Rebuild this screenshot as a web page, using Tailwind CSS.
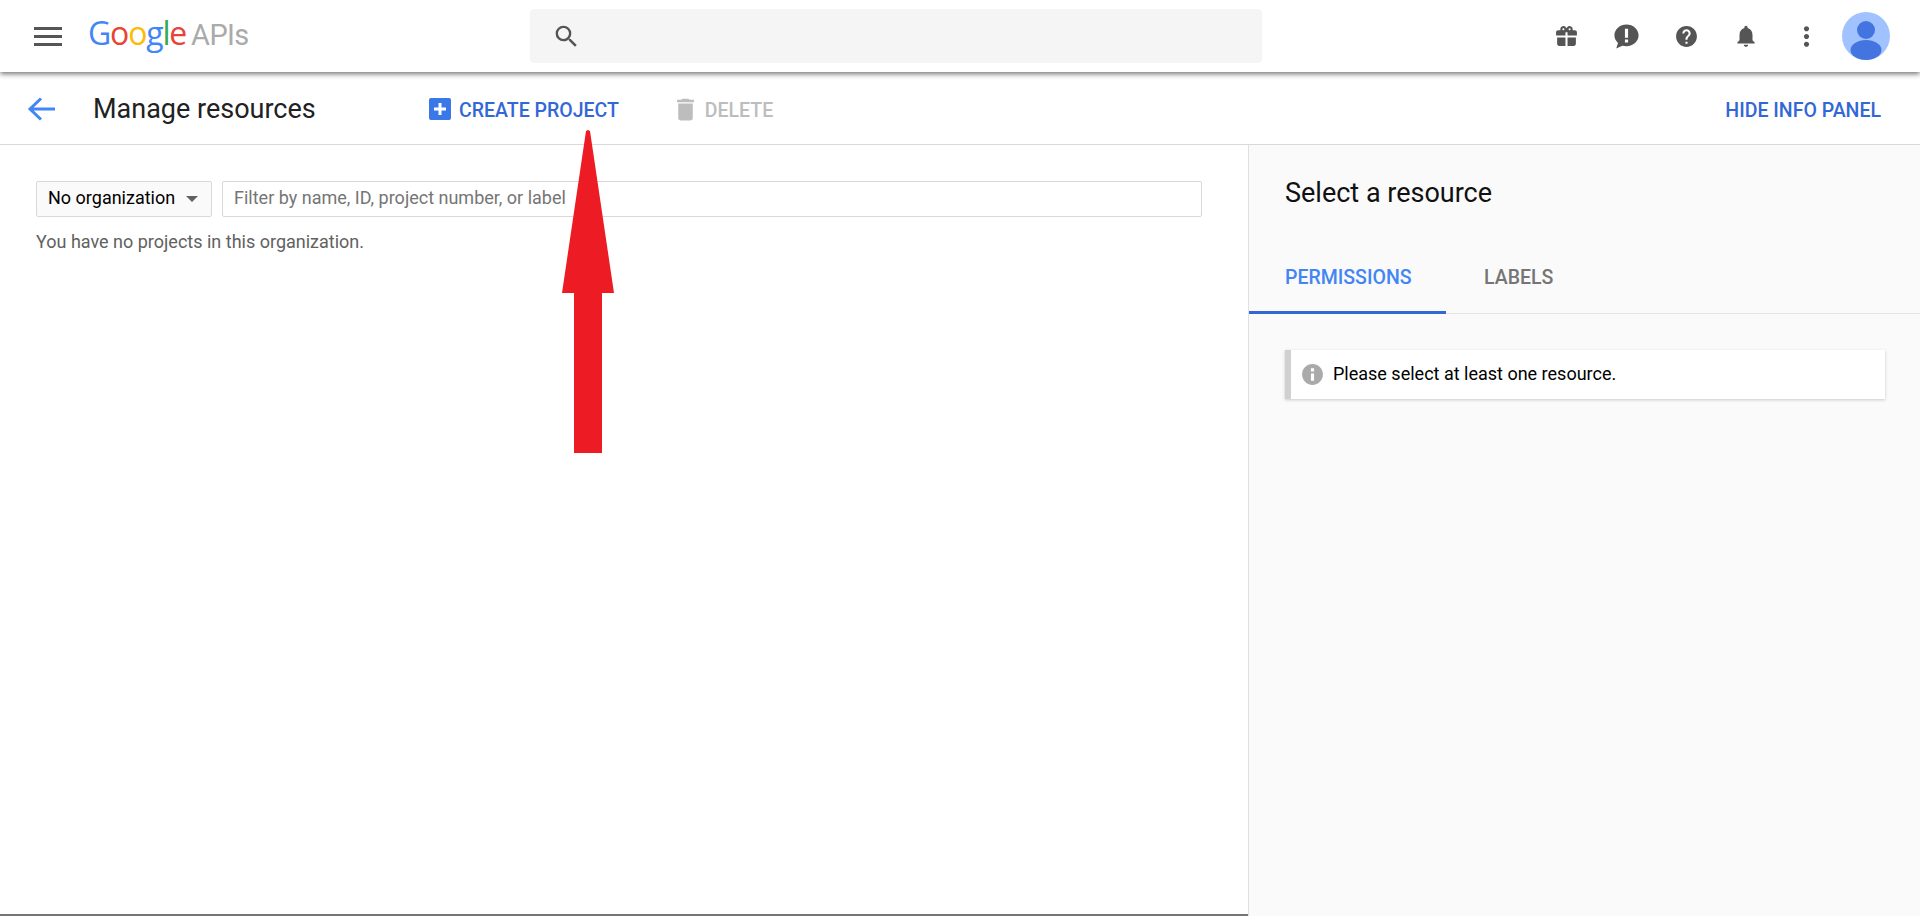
<!DOCTYPE html>
<html lang="en">
	<head>
		<meta charset="UTF-8" />
		<meta name="viewport" content="width=device-width, initial-scale=1.0" />
		<title>Manage resources</title>
		<script src="https://cdn.jsdelivr.net/npm/@tailwindcss/browser@4"></script>
	</head>
	<body class="relative h-[916px] overflow-hidden bg-white font-['Roboto',sans-serif]">
		<!-- top bar -->
		<header class="relative z-10 flex h-[72px] items-center bg-white shadow-[0_2px_5px_rgba(0,0,0,0.55)]">
			<button class="ml-[34px] flex w-[29px] flex-col gap-[5px]">
				<span class="h-[3px] w-[28px] bg-[#555]"></span>
				<span class="h-[3px] w-[28px] bg-[#555]"></span>
				<span class="h-[3px] w-[28px] bg-[#555]"></span>
			</button>
			<a href="#" class="ml-[25px] flex w-[442px] -translate-y-[3px] items-baseline text-[32px] tracking-[-1.2px] font-['Open_Sans',sans-serif]">
				<span class="text-[#4285f4]">G</span><span class="text-[#ea4335]">o</span><span class="text-[#fbbc05]">o</span><span class="text-[#4285f4]">g</span><span class="text-[#34a853]">l</span><span class="text-[#ea4335]">e</span>
				<span class="ml-[5px] text-[#aaaaaa] tracking-[-0.6px] font-['Roboto',sans-serif] text-[29px]">APIs</span>
			</a>
			<div class="flex h-[54px] w-[732px] items-center rounded-sm bg-[#f5f5f5] pl-[22px]">
				<svg class="h-[29px] w-[29px]" viewBox="0 0 24 24" fill="#555"><path d="M15.5 14h-.79l-.28-.27A6.47 6.47 0 0 0 16 9.5 6.5 6.5 0 1 0 9.5 16c1.61 0 3.09-.59 4.23-1.57l.27.28v.79l5 4.99L20.49 19l-4.99-5zm-6 0C7.01 14 5 11.99 5 9.5S7.01 5 9.5 5 14 7.01 14 9.5 11.99 14 9.500 14z"/></svg>
			</div>
			<div class="ml-[274px] flex items-center">
				<span class="flex w-[60px] justify-center"><svg class="h-[25px] w-[25px]" viewBox="0 0 24 24" fill="#555"><path d="M20 6h-2.18c.11-.31.18-.65.18-1a3 3 0 0 0-5.5-1.65L12 4l-.5-.67A3 3 0 0 0 6 5c0 .35.07.69.18 1H4c-1.11 0-2 .89-2 2v3h9V8h2v3h9V8c0-1.11-.89-2-2-2zM9 6a1 1 0 1 1 0-2 1 1 0 0 1 0 2zm6 0a1 1 0 1 1 0-2 1 1 0 0 1 0 2zM3 13v6c0 1.11.89 2 2 2h6v-8H3zm10 0v8h6c1.11 0 2-.89 2-2v-6h-8z"/></svg></span>
				<span class="flex w-[60px] justify-center"><svg class="h-[29px] w-[29px]" viewBox="0 0 24 24" fill="#555"><path fill-rule="evenodd" d="M12 2C6.48 2 2 6.03 2 11c0 2.5 1.13 4.76 2.96 6.39L3.5 22l5.1-2.4c1.07.26 2.2.4 3.4.4 5.52 0 10-4.03 10-9s-4.48-9-10-9zm-1.3 3.5h2.6v7.5h-2.6V5.500zm0 9h2.6V17h-2.600v-2.500z"/></svg></span>
				<span class="flex w-[60px] justify-center"><svg class="h-[25px] w-[25px]" viewBox="0 0 24 24" fill="#555"><path d="M12 2C6.48 2 2 6.48 2 12s4.480 10 10 10 10-4.480 10-10S17.520 2 12 2zm1 17h-2v-2h2v2zm2.070-7.750-.9.920C13.450 12.900 13 13.500 13 15h-2v-.5c0-1.100.45-2.100 1.170-2.830l1.240-1.260c.37-.36.59-.86.59-1.410 0-1.100-.9-2-2-2s-2 .9-2 2H8c0-2.210 1.790-4 4-4s4 1.790 4 4c0 .88-.36 1.680-.93 2.250z"/></svg></span>
				<span class="flex w-[60px] justify-center"><svg class="h-[26px] w-[26px]" viewBox="0 0 24 24" fill="#555"><path d="M12 22c1.100 0 2-.9 2-2h-4c0 1.100.9 2 2 2zm6-6v-5c0-3.070-1.630-5.640-4.500-6.320V4c0-.83-.67-1.500-1.500-1.500s-1.500.67-1.500 1.500v.68C7.640 5.360 6 7.920 6 11v5l-2 2v1h16v-1l-2-2z"/></svg></span>
				<span class="flex w-[60px] justify-center"><svg class="h-[31px] w-[31px]" viewBox="0 0 24 24" fill="#555"><path d="M12 8c1.100 0 2-.9 2-2s-.9-2-2-2-2 .9-2 2 .9 2 2 2zm0 2c-1.100 0-2 .9-2 2s.9 2 2 2 2-.9 2-2-.9-2-2-2zm0 6c-1.100 0-2 .9-2 2s.9 2 2 2 2-.9 2-2-.9-2-2-2z"/></svg></span>
				<svg class="ml-[6px] h-[48px] w-[48px]" viewBox="0 0 48 48"><circle cx="24" cy="24" r="24" fill="#a0c3ff"/><circle cx="24" cy="18" r="9" fill="#4374e0"/><ellipse cx="24" cy="38" rx="15.500" ry="10" fill="#4374e0"/></svg>
			</div>
		</header>

		<!-- toolbar -->
		<div class="flex h-[73px] items-center border-b border-[#d9d9d9] bg-white pt-[2px]">
			<svg class="ml-[26px] h-[32px] w-[32px]" viewBox="0 0 32 32" fill="none" stroke="#4285f4" stroke-width="3"><path d="M29 16H5M15 5.500 4 16l11 10.500"/></svg>
			<h1 class="ml-[35px] w-[336px] text-[27px] text-[#212121]">Manage resources</h1>
			<a href="#" class="flex items-center text-[19.500px] font-medium text-[#3367d6]">
				<span class="flex h-[22px] w-[22px] items-center justify-center rounded-[2px] bg-[#3b78e7]">
					<svg class="h-[14px] w-[14px]" viewBox="0 0 14 14" fill="#fff"><path d="M5.500 1h3v4.500H13v3H8.500V13h-3V8.500H1v-3h4.500z"/></svg>
				</span>
				<span class="ml-[8px] pt-[3px]">CREATE PROJECT</span>
			</a>
			<a href="#" class="ml-[52px] flex items-center text-[19.500px] font-medium text-[#bdbdbd]">
				<svg class="h-[29px] w-[29px]" viewBox="0 0 24 24" fill="#bdbdbd"><path d="M6 19c0 1.100.9 2 2 2h8c1.100 0 2-.9 2-2V7H6v12zM19 4h-3.500l-1-1h-5l-1 1H5v2h14V4z"/></svg>
				<span class="ml-[5px] pt-[3px]">DELETE</span>
			</a>
			<a href="#" class="ml-auto mr-[39px] pt-[3px] text-[19.500px] font-medium text-[#3367d6]">HIDE INFO PANEL</a>
		</div>

		<!-- content -->
		<main class="flex h-[771px]">
			<section class="w-[1248px] border-b-2 border-[#757575] px-[36px] pt-[36px]">
				<div class="flex gap-[10px]">
					<button class="flex h-[36px] w-[176px] items-center rounded-[2px] border border-[#d9d9d9] bg-[#fafafa] pb-[4px] pl-[11px] text-[18px] text-black">
						No organization
						<span class="ml-[11px] mt-[4px] h-0 w-0 border-x-[6px] border-t-[6px] border-x-transparent border-t-[#616161]"></span>
					</button>
					<input class="h-[36px] w-[980px] rounded-[2px] border border-[#d9d9d9] px-[11px] pb-[4px] text-[18px] placeholder:text-[#757575]" placeholder="Filter by name, ID, project number, or label" />
				</div>
				<p class="mt-[11px] text-[18px] text-[#616161]">You have no projects in this organization.</p>
			</section>
			<aside class="flex-1 border-l border-[#e0e0e0] bg-[#fafafa]">
				<h2 class="pl-[36px] pt-[32px] text-[27px] leading-[32px] text-[#111]">Select a resource</h2>
				<div class="mt-[40px] flex h-[65px] border-b border-[#e5e5e5] text-[19.500px] font-medium">
					<a href="#" class="h-[65px] w-[197px] border-b-[3px] border-[#3367d6] pl-[36px] pt-[14px] text-[#4285f4]">PERMISSIONS</a>
					<a href="#" class="pl-[38px] pt-[14px] text-[#757575]">LABELS</a>
				</div>
				<div class="ml-[36px] mt-[36px] flex h-[49px] w-[600px] items-center border-l-[6px] border-[#d0d0d0] bg-white pl-[9px] text-[18px] text-black shadow-[0_1px_3px_rgba(0,0,0,0.2)]">
					<svg class="h-[25px] w-[25px]" viewBox="0 0 24 24" fill="#aaaaaa"><path d="M12 2C6.480 2 2 6.480 2 12s4.480 10 10 10 10-4.480 10-10S17.520 2 12 2zm1.500 16h-3v-7h3v7zm0-9h-3V6h3v3z"/></svg>
					<span class="ml-[8px] -translate-y-px">Please select at least one resource.</span>
				</div>
			</aside>
		</main>

		<!-- annotation arrow drawn over the screenshot -->
		<svg class="absolute left-[560px] top-[128px] z-20" width="56" height="326" viewBox="560 128 56 326"><path d="M588 130 L590 131 L614 293 H602 V453 H574 V293 H562 L586 131 Z" fill="#ed1c24"/></svg>
	</body>
</html>
